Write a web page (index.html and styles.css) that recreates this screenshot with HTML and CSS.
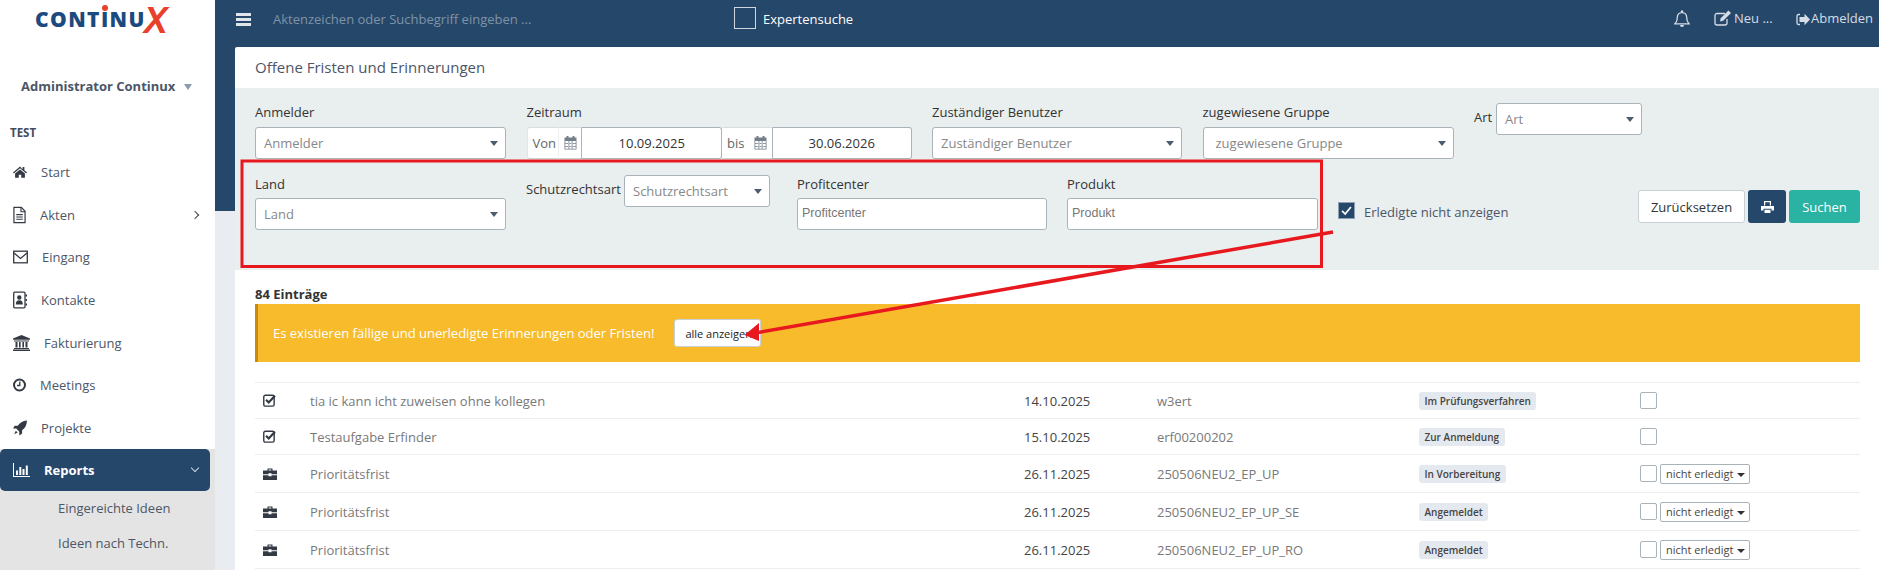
FILE: index.html
```html
<!DOCTYPE html>
<html lang="de">
<head>
<meta charset="utf-8">
<title>Offene Fristen und Erinnerungen</title>
<link rel="stylesheet" href="styles.css">
</head>
<body>
<svg class="sprite" aria-hidden="true">
  <symbol id="i-home" viewBox="0 0 16 14"><path d="M8 .8 0 7.600l.9 1.100L8 2.800l7.100 5.900.9-1.100-3-2.500V1.200h-2v2.600z"/><path d="M2.400 8.800 8 4.200l5.600 4.600v4.900H9.400V10H6.600v3.700H2.400z"/></symbol>
  <symbol id="i-file" viewBox="0 0 14 18"><path d="M1 .8h8l4 4.200v12.200H1z" fill="none" stroke="currentColor" stroke-width="1.300"/><path d="M8.600 1v4.500H13" fill="none" stroke="currentColor" stroke-width="1.200"/><path d="M3.500 8h7v1.200h-7zM3.500 10.500h7v1.200h-7zM3.500 13h7v1.200h-7z"/></symbol>
  <symbol id="i-mail" viewBox="0 0 15 13"><rect x=".7" y=".7" width="13.600" height="11.600" fill="none" stroke="currentColor" stroke-width="1.300"/><path d="M1 2.500 7.500 8 14 2.500" fill="none" stroke="currentColor" stroke-width="1.300"/></symbol>
  <symbol id="i-contact" viewBox="0 0 14 17"><rect x=".7" y=".7" width="11.300" height="15.600" rx="1" fill="none" stroke="currentColor" stroke-width="1.300"/><circle cx="6.300" cy="6" r="2.200"/><path d="M2.800 13c0-3 1.200-4.300 3.500-4.300S9.800 10 9.800 13z"/><path d="M12.500 3h1.500v2h-1.500zM12.500 7.500h1.500v2h-1.500zM12.500 12h1.500v2h-1.500z"/></symbol>
  <symbol id="i-bank" viewBox="0 0 17 16"><path d="M8.500 0 0 3.600v1.200h17V3.600z"/><path d="M1 5.500h15v1H1zM2.500 7h2v5.500h-2zM6 7h1.600v5.500H6zM9.400 7H11v5.500H9.400zM12.500 7h2v5.500h-2zM1 13h15v1H1zM0 14.500h17V16H0z"/></symbol>
  <symbol id="i-clock" viewBox="0 0 13 13"><circle cx="6.500" cy="6.500" r="5.500" fill="none" stroke="currentColor" stroke-width="2"/><path d="M6.800 3v4H4" fill="none" stroke="currentColor" stroke-width="1.300"/></symbol>
  <symbol id="i-rocket" viewBox="0 0 14 15"><path d="M14 0C9.500.3 6.800 2.500 4.800 5.200H1.700L0 8h3.300l3 3.200V15l2.800-1.900V9.800C12 7.800 13.800 4.800 14 0z"/><path d="M2.800 10.200 1.200 13.800l3.500-1.700z"/></symbol>
  <symbol id="i-chart" viewBox="0 0 17 14"><path d="M0 0h1v13h16v1H0z"/><path d="M3 7.500h2V12H3zM6.300 4h2v8h-2zM9.500 6h2v6h-2zM12.800 2.500h2V12h-2z"/></symbol>
  <symbol id="i-check" viewBox="0 0 12 12"><rect x=".7" y="1.200" width="9.600" height="10" rx="1.500" fill="none" stroke="currentColor" stroke-width="1.300"/><path d="M2.800 5.200 5.300 7.800 11 1.600" fill="none" stroke="currentColor" stroke-width="2"/></symbol>
  <symbol id="i-case" viewBox="0 0 14 12"><path d="M4.500 2.500V.5h5v2H14v3.700H8.500v-.9h-3v.9H0V2.500zM5.700 1.600v.9h2.600v-.9zM0 7.200h5.500v1h3v-1H14V12H0z"/></symbol>
  <symbol id="i-cal" viewBox="0 0 13 14"><path d="M2.500 0h2v2.200h-2zM8.500 0h2v2.200h-2z"/><path d="M.5 1.500h12V13.500H.5zM1.300 5v7.700h10.400V5zM4.500 5v7.700h.8V5zM7.700 5v7.700h.8V5zM1.300 7.300h10.400v.7H1.300zM1.300 10h10.400v.7H1.300z" fill-rule="evenodd"/></symbol>
  <symbol id="i-bell" viewBox="0 0 16 18"><path d="M1 13.800c1.900-1.800 2.300-3.500 2.300-6.300C3.300 4.500 5 2.600 8 2.600s4.700 1.900 4.700 4.900c0 2.800.4 4.500 2.300 6.300z" fill="none" stroke="currentColor" stroke-width="1.300"/><circle cx="8" cy="1.500" r="1.200"/><path d="M6 15h4a2 2 0 0 1-4 0z"/></symbol>
  <symbol id="i-edit" viewBox="0 0 17 16"><path d="M11 3.500H3a2 2 0 0 0-2 2V13a2 2 0 0 0 2 2h8a2 2 0 0 0 2-2V9" fill="none" stroke="currentColor" stroke-width="1.300"/><path d="M14.400.5 17 3 9.200 10.800 6 11.500l.7-3.200z"/></symbol>
  <symbol id="i-out" viewBox="0 0 14 13"><path d="M4 1.500H2.500A1.500 1.500 0 0 0 1 3v7a1.500 1.500 0 0 0 1.500 1.500H4" fill="none" stroke="currentColor" stroke-width="1.300"/><path d="M14 6.500 8.500.8V4h-5v5h5v3.200z"/></symbol>
  <symbol id="i-print" viewBox="0 0 13 12"><path d="M3 0h7v4.500H8.800V1.200H4.200v3.300H3z"/><path d="M0 5h13v4.500h-2.500V7.800h-8v1.700H0z"/><path d="M3.500 8.700h6V12h-6z"/></symbol>
</svg>

<div class="app">
  <aside class="sidebar">
    <div class="logo"><span class="logo-i">CONT<span class="logo-dot">I</span>NU</span><span class="logo-x">X</span></div>
    <div class="user">Administrator Continux<span class="user-caret"></span></div>
    <div class="section">TEST</div>
    <nav class="nav">
      <a class="nav-item"><svg class="ic w14"><use href="#i-home"/></svg>Start</a>
      <a class="nav-item"><svg class="ic w13"><use href="#i-file"/></svg>Akten<span class="chev-right"></span></a>
      <a class="nav-item"><svg class="ic w15"><use href="#i-mail"/></svg>Eingang</a>
      <a class="nav-item"><svg class="ic w14"><use href="#i-contact"/></svg>Kontakte</a>
      <a class="nav-item"><svg class="ic w17"><use href="#i-bank"/></svg>Fakturierung</a>
      <a class="nav-item"><svg class="ic w13"><use href="#i-clock"/></svg>Meetings</a>
      <a class="nav-item"><svg class="ic w14"><use href="#i-rocket"/></svg>Projekte</a>
    </nav>
    <div class="sub-area">
      <a class="nav-item active"><svg class="ic w17"><use href="#i-chart"/></svg>Reports<span class="chev-down"></span></a>
      <a class="sub-item">Eingereichte Ideen</a>
      <a class="sub-item">Ideen nach Techn.</a>
    </div>
  </aside>

  <main class="main">
    <header class="topbar">
      <div class="burger"><span></span><span></span><span></span></div>
      <div class="search">Aktenzeichen oder Suchbegriff eingeben ...</div>
      <span class="expert-box"></span>
      <span class="expert">Expertensuche</span>
      <div class="top-right">
        <svg class="top-bell"><use href="#i-bell"/></svg>
        <span class="top-link neu"><svg class="top-edit"><use href="#i-edit"/></svg>Neu ...</span>
        <span class="top-link out"><svg class="top-out"><use href="#i-out"/></svg>Abmelden</span>
      </div>
    </header>

    <section class="panel">
      <h1 class="title">Offene Fristen und Erinnerungen</h1>
      <div class="filter">
        <div class="frow first">
          <div class="field w251"><label>Anmelder</label><div class="select">Anmelder</div></div>
          <div class="field w385"><label>Zeitraum</label>
            <div class="dates">
              <span class="addon von">Von</span><span class="addon cal"><svg class="ic-cal"><use href="#i-cal"/></svg></span><span class="date d1">10.09.2025</span>
              <span class="addon bis">bis</span><span class="addon cal"><svg class="ic-cal"><use href="#i-cal"/></svg></span><span class="date d2">30.06.2026</span>
            </div>
          </div>
          <div class="field w250"><label>Zuständiger Benutzer</label><div class="select">Zuständiger Benutzer</div></div>
          <div class="field w251"><label>zugewiesene Gruppe</label><div class="select indent">zugewiesene Gruppe</div></div>
          <div class="inline art"><label>Art</label><div class="select w146">Art</div></div>
        </div>
        <div class="frow second">
          <div class="field w251"><label>Land</label><div class="select">Land</div></div>
          <div class="inline schutz"><label>Schutzrechtsart</label><div class="select w146">Schutzrechtsart</div></div>
          <div class="field w250 profit"><label>Profitcenter</label><div class="input">Profitcenter</div></div>
          <div class="field w251"><label>Produkt</label><div class="input">Produkt</div></div>
          <div class="done"><span class="done-box"><svg viewBox="0 0 17 17"><path d="M3.500 9 7 12.500 13.500 4.500" fill="none" stroke="#fff" stroke-width="2"/></svg></span><span class="done-text">Erledigte nicht anzeigen</span></div>
          <div class="actions">
            <button class="btn reset">Zurücksetzen</button>
            <button class="btn print"><svg class="ic-print"><use href="#i-print"/></svg></button>
            <button class="btn search-btn">Suchen</button>
          </div>
        </div>
      </div>

      <div class="content">
        <div class="count">84 Einträge</div>
        <div class="alert"><span>Es existieren fällige und unerledigte Erinnerungen oder Fristen!</span><button class="alert-btn">alle anzeigen</button></div>
        <table class="list">
          <colgroup><col class="c1"><col class="c2"><col class="c3"><col class="c4"><col class="c5"><col></colgroup>
          <tr class="short">
            <td class="t-ic"><svg class="ic-check"><use href="#i-check"/></svg></td><td>tia ic kann icht zuweisen ohne kollegen</td><td class="t-date">14.10.2025</td><td>w3ert</td><td><span class="badge">Im Prüfungsverfahren</span></td><td><div class="t-act"><span class="box"></span></div></td>
          </tr>
          <tr class="short">
            <td class="t-ic"><svg class="ic-check"><use href="#i-check"/></svg></td><td>Testaufgabe Erfinder</td><td class="t-date">15.10.2025</td><td>erf00200202</td><td><span class="badge">Zur Anmeldung</span></td><td><div class="t-act"><span class="box"></span></div></td>
          </tr>
          <tr>
            <td class="t-ic"><svg class="ic-case"><use href="#i-case"/></svg></td><td>Prioritätsfrist</td><td class="t-date">26.11.2025</td><td>250506NEU2_EP_UP</td><td><span class="badge">In Vorbereitung</span></td><td><div class="t-act"><span class="box"></span><button class="state">nicht erledigt<span class="state-caret"></span></button></div></td>
          </tr>
          <tr>
            <td class="t-ic"><svg class="ic-case"><use href="#i-case"/></svg></td><td>Prioritätsfrist</td><td class="t-date">26.11.2025</td><td>250506NEU2_EP_UP_SE</td><td><span class="badge">Angemeldet</span></td><td><div class="t-act"><span class="box"></span><button class="state">nicht erledigt<span class="state-caret"></span></button></div></td>
          </tr>
          <tr>
            <td class="t-ic"><svg class="ic-case"><use href="#i-case"/></svg></td><td>Prioritätsfrist</td><td class="t-date">26.11.2025</td><td>250506NEU2_EP_UP_RO</td><td><span class="badge">Angemeldet</span></td><td><div class="t-act"><span class="box"></span><button class="state">nicht erledigt<span class="state-caret"></span></button></div></td>
          </tr>
        </table>
      </div>
    </section>
  </main>

  <svg class="annot" viewBox="0 0 1879 570" aria-hidden="true">
    <rect x="242" y="161" width="1079.500" height="105.500" fill="none" stroke="#e8181f" stroke-width="3"/>
    <path d="M1333 232 755 333" fill="none" stroke="#e8181f" stroke-width="3.500"/>
    <path d="M744.500 335 759 323 759 341z" fill="#e8181f"/>
  </svg>
</div>
</body>
</html>
```
FILE: styles.css
```css
* { box-sizing: border-box; }
html, body { margin: 0; padding: 0; }
body { font-family: "Open Sans", "Liberation Sans", sans-serif; font-size: 13px; color: #444; background: #fff; }
.sprite { width: 0; height: 0; position: absolute; }
svg { fill: currentColor; display: block; flex: none; }
.app { position: relative; display: flex; width: 1879px; height: 570px; overflow: hidden; }

/* sidebar */
.sidebar { width: 215px; flex: none; background: #fff; display: flex; flex-direction: column; color: #4c5667; }
.logo { height: 47px; padding-left: 35px; display: flex; align-items: flex-start; white-space: nowrap; }
.logo-i { display: block; margin-top: 9px; font-size: 21px; line-height: 21px; font-weight: 800; color: #1b4a7e; letter-spacing: 1.400px; }
.logo-x { display: block; margin-top: 3px; margin-left: -2px; font-family: "Liberation Sans", Arial, sans-serif; font-size: 36px; line-height: 36px; font-weight: 700; font-style: italic; color: #e8402a; }
.logo-dot { position: relative; }
.logo-dot::before { content: ""; position: absolute; left: 1px; top: 0; width: 6px; height: 6px; border-radius: 50%; background: #e8402a; }
.user { margin-top: 27px; height: 24px; line-height: 24px; padding-left: 21px; font-weight: 700; color: #4c5667; white-space: nowrap; display: flex; align-items: center; }
.user-caret { width: 0; height: 0; margin: 2px 0 0 9px; border: 4px solid transparent; border-top: 6px solid #8b9cb2; border-bottom: 0; }
.section { margin-top: 26px; height: 18px; line-height: 18px; padding-left: 10px; font-size: 11.500px; font-weight: 700; color: #3f4d5f; }
.nav { margin-top: 9px; }
.nav-item { height: 42.600px; display: flex; align-items: center; gap: 14px; padding-left: 13px; color: #4c5667; position: relative; }
.ic { color: #333a44; height: 18px; }
.w13 { width: 13px; } .w14 { width: 14px; } .w15 { width: 15px; } .w17 { width: 17px; }
.chev-right { position: absolute; left: 192px; top: 18px; width: 6px; height: 6px; border-top: 1.300px solid #444; border-right: 1.300px solid #444; transform: rotate(45deg); }
.sub-area { flex: 1; background: #e4e4e4; }
.nav-item.active { height: 42px; width: 210px; background: #25476a; color: #fff; font-weight: 700; border-radius: 5px; }
.nav-item.active .ic { color: #fff; }
.chev-down { position: absolute; left: 192px; top: 16px; width: 6px; height: 6px; border-right: 1.200px solid #cbd5df; border-bottom: 1.200px solid #cbd5df; transform: rotate(45deg); }
.sub-item { display: block; height: 35px; line-height: 35px; padding-left: 58px; color: #4c5667; }

/* main */
.main { flex: 1; padding-left: 20px; background: linear-gradient(#25476a 211px, #e9edf2 211px); min-width: 0; }
.topbar { height: 47px; margin-left: -20px; padding-left: 21px; display: flex; align-items: flex-start; color: #fff; background: #25476a; }
.burger { margin-top: 13px; width: 15px; display: flex; flex-direction: column; gap: 2px; }
.burger span { height: 3px; background: #dfe5eb; }
.search { margin-left: 22px; width: 461px; line-height: 18px; margin-top: 10px; color: #7f93a8; }
.expert-box { width: 22px; height: 22px; margin-top: 7px; border: 1px solid #cfd6dd; }
.expert { margin-left: 7px; margin-top: 10px; line-height: 18px; color: #fff; }
.top-right { margin-left: auto; display: flex; align-items: flex-start; color: #d5dde5; }
.top-bell { width: 16px; height: 18px; margin-top: 10px; margin-right: 24px; }
.top-link { display: flex; align-items: center; line-height: 18px; margin-top: 9px; white-space: nowrap; }
.top-edit { width: 17px; height: 16px; margin-right: 3px; }
.top-out { width: 14px; height: 13px; margin-right: 1px; margin-top: 2px; }
.neu { width: 82px; }
.out { width: 83px; }

.panel { background: #fff; border-radius: 2px 0 0 0; height: 523px; overflow: hidden; }
.title { margin: 0; height: 41px; padding-left: 20px; line-height: 41px; font-size: 15px; font-weight: 400; color: #4c5667; }
.filter { background: #e9eeee; padding: 15px 19px 40px 20px; color: #333; }
.frow { display: flex; gap: 20px; align-items: flex-start; }
.first { gap: 20.500px; }
.second { margin-top: 15px; }
.field label { display: block; height: 18px; line-height: 18px; margin-bottom: 6px; }
.second .field label { margin-top: 1px; margin-bottom: 5px; }
.w251 { width: 251px; } .w385 { width: 385px; } .w250 { width: 250px; }
.w146 { width: 146px; }
.select, .input { height: 32px; background: #fff; border: 1px solid #a9b4ba; border-radius: 3px; line-height: 30px; color: #888; position: relative; white-space: nowrap; }
.select { padding-left: 8px; }
.select.indent { padding-left: 12px; }
.select::after { content: ""; position: absolute; right: 7px; top: 13px; border: 4px solid transparent; border-top: 5px solid #4d5d70; border-bottom: 0; }
.input { padding-left: 4px; font-family: "Liberation Sans", Arial, sans-serif; font-size: 12.500px; color: #777; line-height: 28px; }
.inline { display: flex; align-items: flex-start; justify-content: space-between; }
.inline label { line-height: 18px; }
.art { width: 168px; }
.art label { margin-top: 5px; }
.schutz { margin-top: 1px; width: 244px; }
.schutz label { margin-top: 5px; }
.profit { margin-left: 7px; }
.dates { display: flex; height: 32px; }
.addon { display: flex; align-items: center; background: #fff; height: 32px; border-top: 1px solid #d8dee0; border-bottom: 1px solid #c9d1d4; color: #666; }
.von { width: 33px; padding-left: 5px; border-left: 1px solid #e2e6e8; border-radius: 3px 0 0 3px; border-right: 1px solid #eef0f1; }
.bis { width: 28px; padding-left: 5px; }
.addon.cal { width: 23px; justify-content: center; border-right: 1px solid #a9b4ba; }
.ic-cal { width: 13px; height: 14px; color: #727f88; }
.date { height: 32px; background: #fff; border: 1px solid #a9b4ba; border-left: 0; line-height: 30px; text-align: center; color: #333; }
.d1 { width: 140px; border-radius: 0 3px 3px 0; }
.d2 { width: 139px; border-radius: 0 3px 3px 0; }
.done { display: flex; align-items: flex-start; gap: 9px; margin-top: 28px; }
.done-box { width: 17px; height: 17px; background: #25476a; border: 1px solid #8fa0b0; }
.done-text { margin-top: 1px; line-height: 18px; color: #4c5667; white-space: nowrap; }
.actions { margin-left: auto; display: flex; gap: 3px; margin-top: 16px; }
.btn { height: 33px; border-radius: 3px; font: inherit; padding: 0; border: 1px solid transparent; display: flex; align-items: center; justify-content: center; }
.reset { width: 107px; background: #fff; border-color: #c9d1d4; color: #333; }
.print { width: 38px; background: #25476a; color: #fff; }
.search-btn { width: 71px; background: #2ab2a3; color: #fff; }
.ic-print { width: 13px; height: 12px; }

.content { padding: 15px 19px 0 20px; }
.count { height: 18px; line-height: 18px; font-weight: 700; color: #333; margin-bottom: 1px; }
.alert { height: 58px; background: #f8bb2c; border-left: 3px solid #c88a0d; padding-left: 15px; display: flex; align-items: center; gap: 20px; color: #fff; }
.alert-btn { width: 87px; height: 28px; padding: 0 0 0 10px; text-align: left; font: inherit; font-size: 11px; color: #222; background: #fff; border: 1px solid #c9d1d4; border-radius: 3px; }
.list { width: 1605px; margin-top: 20px; border-collapse: collapse; table-layout: fixed; color: #797979; }
.list tr { height: 38px; }
.list tr.short { height: 36px; }
.list td { padding: 0; border-top: 1px solid #eee; border-bottom: 1px solid #eee; white-space: nowrap; }
.c1 { width: 55px; } .c2 { width: 714px; } .c3 { width: 133px; } .c4 { width: 262px; } .c5 { width: 221px; }
.list .t-ic { padding-left: 8px; color: #333a44; }
.ic-check { width: 13px; height: 13px; }
.ic-case { width: 14px; height: 12px; }
.t-date { color: #444; }
.badge { display: inline-block; height: 18px; line-height: 18px; padding: 0 5.500px; border-radius: 3px; background: #e4e8ef; color: #444; font-size: 10px; font-weight: 600; vertical-align: middle; }
.t-act { display: flex; align-items: center; gap: 3px; }
.box { width: 17px; height: 17px; background: #fff; border: 1px solid #a9b4ba; border-radius: 2px; }
.state { width: 90px; height: 20px; padding: 0 0 0 5px; font: inherit; font-size: 11px; line-height: 17px; color: #444; background: #fff; border: 1px solid #a9b4ba; border-radius: 2px; display: flex; align-items: center; gap: 4px; white-space: nowrap; }
.state-caret { border: 4px solid transparent; border-top: 4px solid #333; border-bottom: 0; margin-top: 2px; }

.annot { position: absolute; left: 0; top: 0; width: 1879px; height: 570px; pointer-events: none; fill: none; }
```
